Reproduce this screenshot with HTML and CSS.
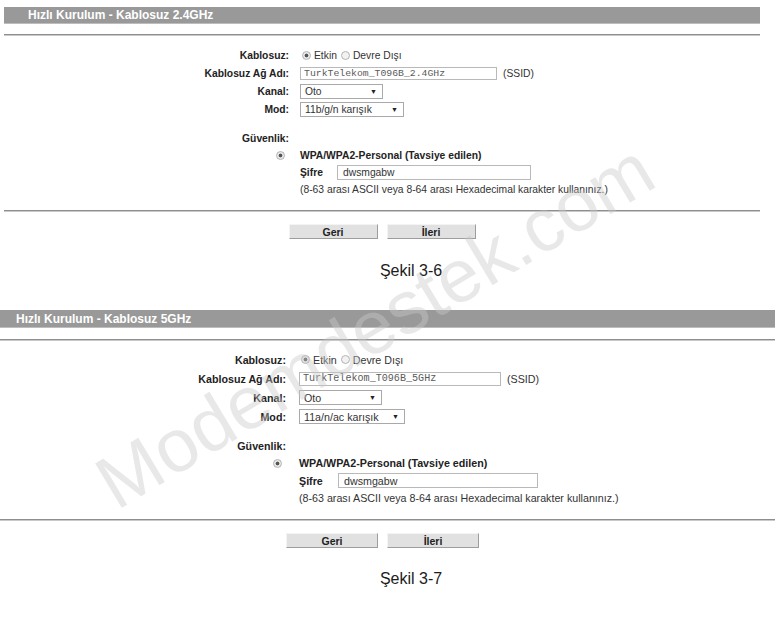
FILE: index.html
```html
<!DOCTYPE html>
<html lang="tr">
<head>
    <meta charset="UTF-8">
    <meta name="viewport" content="width=device-width, initial-scale=1.0">
    <title>Hızlı Kurulum - Kablosuz</title>
    <link rel="stylesheet" href="styles.css">
</head>
<body>

    <section class="panel panel-24">
        <div class="bar">Hızlı Kurulum - Kablosuz 2.4GHz</div>
        <div class="rule"></div>
        <div class="form">
            <div class="row">
                <span class="label">Kablosuz:</span>
                <span class="value"><input class="radio" type="radio" name="w24" checked> Etkin <input class="radio" type="radio" name="w24"> Devre Dışı</span>
            </div>
            <div class="row">
                <span class="label">Kablosuz Ağ Adı:</span>
                <span class="value"><input class="ssid" type="text" value="TurkTelekom_T096B_2.4GHz" readonly><span class="hint">(SSID)</span></span>
            </div>
            <div class="row">
                <span class="label">Kanal:</span>
                <span class="value"><span class="select select-short"><span>Oto</span><span class="caret">▼</span></span></span>
            </div>
            <div class="row">
                <span class="label">Mod:</span>
                <span class="value"><span class="select select-long"><span>11b/g/n karışık</span><span class="caret">▼</span></span></span>
            </div>
        </div>
        <div class="security">
            <div class="row"><span class="label">Güvenlik:</span></div>
            <div class="row">
                <span class="label"><input class="radio radio-sec" type="radio" checked></span>
                <span class="value strong">WPA/WPA2-Personal (Tavsiye edilen)</span>
            </div>
            <div class="row">
                <span class="label"></span>
                <span class="value"><b class="pw-label">Şifre</b><input class="pw" type="text" value="dwsmgabw" readonly></span>
            </div>
            <div class="row">
                <span class="label"></span>
                <span class="value">(8-63 arası ASCII veya 8-64 arası Hexadecimal karakter kullanınız.)</span>
            </div>
        </div>
        <div class="rule rule-end"></div>
        <div class="actions">
            <button class="btn">Geri</button>
            <button class="btn">İleri</button>
        </div>
    </section>
    <p class="caption caption-first">Şekil 3-6</p>

    <section class="panel panel-5">
        <div class="bar">Hızlı Kurulum - Kablosuz 5GHz</div>
        <div class="rule"></div>
        <div class="form">
            <div class="row">
                <span class="label">Kablosuz:</span>
                <span class="value"><input class="radio" type="radio" name="w5" checked> Etkin <input class="radio" type="radio" name="w5"> Devre Dışı</span>
            </div>
            <div class="row">
                <span class="label">Kablosuz Ağ Adı:</span>
                <span class="value"><input class="ssid" type="text" value="TurkTelekom_T096B_5GHz" readonly><span class="hint">(SSID)</span></span>
            </div>
            <div class="row">
                <span class="label">Kanal:</span>
                <span class="value"><span class="select select-short"><span>Oto</span><span class="caret">▼</span></span></span>
            </div>
            <div class="row">
                <span class="label">Mod:</span>
                <span class="value"><span class="select select-long"><span>11a/n/ac karışık</span><span class="caret">▼</span></span></span>
            </div>
        </div>
        <div class="security">
            <div class="row"><span class="label">Güvenlik:</span></div>
            <div class="row">
                <span class="label"><input class="radio radio-sec" type="radio" checked></span>
                <span class="value strong">WPA/WPA2-Personal (Tavsiye edilen)</span>
            </div>
            <div class="row">
                <span class="label"></span>
                <span class="value"><b class="pw-label">Şifre</b><input class="pw" type="text" value="dwsmgabw" readonly></span>
            </div>
            <div class="row">
                <span class="label"></span>
                <span class="value">(8-63 arası ASCII veya 8-64 arası Hexadecimal karakter kullanınız.)</span>
            </div>
        </div>
        <div class="rule rule-end"></div>
        <div class="actions">
            <button class="btn">Geri</button>
            <button class="btn">İleri</button>
        </div>
    </section>
    <p class="caption caption-second">Şekil 3-7</p>

    <div class="watermark">Modemdestek.com</div>

</body>
</html>
```

FILE: styles.css
```css
:root {
    --bar-bg: #999999;
    --rule-dark: #8e8e8e;
    --rule-light: #c9c9c9;
    --text: #2a2a2a;
    --field-border: #b9b9b9;
    --btn-bg: #e1e1e1;
}
html, body { margin: 0; padding: 0; }
body { font-family: 'Liberation Sans', Arial, sans-serif; color: var(--text); background: #fff; position: relative; min-height: 619px; overflow: hidden; }

/* panel sizes differ a little, the two screenshots were taken at different zoom */
.panel-24 { --fs: 10.3px; --row: 18px; --sec-row: 17px; --label-w: 285px; --gap: 11px; --mono: 9.8px; margin: 7px 15px 0 4px; }
.panel-5 { --fs: 10.7px; --row: 19px; --sec-row: 17.5px; --label-w: 286px; --gap: 13px; --mono: 10.1px; margin: 30px 0 0 0; }

.bar { background: var(--bar-bg); color: #fff; font-weight: 700; font-size: 12px; height: 17px; line-height: 17px; padding-left: 24px; border-bottom: 1px solid #bdbdbd; box-sizing: border-box; }
.panel-5 .bar { height: 18px; line-height: 18px; padding-left: 16px; }

.rule { height: 1px; border-top: 1px solid var(--rule-dark); background: var(--rule-light); margin-top: 10px; }
.panel-5 .rule { margin-top: 11px; }
.rule-end, .panel-5 .rule-end { margin-top: 12px; }

.form { margin-top: 10px; font-size: var(--fs); }
.panel-5 .form { margin-top: 9px; }
.form .row { height: var(--row); }
.security { margin-top: 12px; font-size: var(--fs); }
.panel-5 .security { margin-top: 11px; }
.security .row { height: var(--sec-row); }

.row { display: flex; align-items: center; gap: var(--gap); }
.label { width: var(--label-w); flex: none; text-align: right; font-weight: 700; color: #222; display: flex; justify-content: flex-end; align-items: center; }
.value { display: flex; align-items: center; white-space: nowrap; color: #333; }
.strong { font-weight: 700; color: #222; }

.radio { -webkit-appearance: none; appearance: none; width: 9px; height: 9px; margin: 0 3px 0 2px; border: 1px solid #b3b3b3; border-radius: 50%; background: #f2f2f2; box-sizing: border-box; }
.radio:checked { background: radial-gradient(circle, #555 0, #555 1.6px, #e8e8e8 2.2px); }
.value .radio + .radio { margin-left: 4px; }
.radio-sec { margin: 0 4px 0 0; }

.ssid { width: 197px; height: 13px; box-sizing: border-box; border: 1px solid var(--field-border); padding: 0 3px; font-family: 'Liberation Mono', 'Courier New', monospace; font-size: var(--mono); color: #5a5a5a; outline: none; }
.panel-5 .ssid { width: 202px; height: 14px; }
.hint { margin-left: 6px; }

.select { display: flex; justify-content: space-between; align-items: center; height: 15px; box-sizing: border-box; border: 1px solid #a9a9a9; padding: 0 5px 0 4px; background: #fff; }
.select-short { width: 83px; }
.select-long { width: 104px; }
.panel-5 .select-long { width: 106px; }
.caret { font-size: 7px; color: #222; }

.pw-label { width: 37px; color: #222; }
.panel-5 .pw-label { width: 39px; }
.pw { width: 194px; height: 15px; box-sizing: border-box; border: 1px solid var(--field-border); padding: 0 5px; font-family: inherit; font-size: var(--fs); color: #333; outline: none; }
.panel-5 .pw { width: 200px; }

.actions { display: flex; justify-content: center; gap: 9px; margin-top: 12px; }
.panel-5 .actions { padding-right: 10px; }
.btn { width: 89px; height: 15px; padding: 0; background: var(--btn-bg); border: 1px solid; border-color: #f4f4f4 #9d9d9d #9d9d9d #f4f4f4; font-family: inherit; font-weight: 700; font-size: 10.5px; color: #222; line-height: 12px; }
.panel-5 .btn { width: 92px; }

.caption { margin: 22px 0 0 0; padding-left: 47px; text-align: center; font-size: 16px; line-height: 19px; color: #1c1c1c; }
.caption-second { margin-top: 21px; }

.watermark { position: absolute; left: 375px; top: 326px; transform: translate(-50%, -50%) rotate(-31deg); font-size: 75px; line-height: 1; white-space: nowrap; color: rgba(200, 200, 200, 0.42); pointer-events: none; }
```
